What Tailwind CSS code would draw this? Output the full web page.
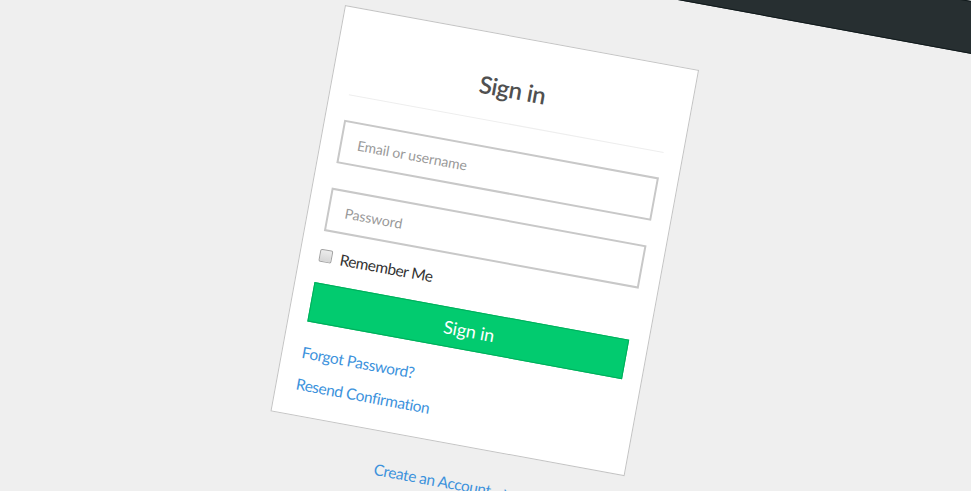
<!DOCTYPE html>
<html lang="en">
<head>
<meta charset="utf-8">
<title>Sign in</title>
<script src="https://cdn.jsdelivr.net/npm/@tailwindcss/browser@4"></script>
</head>
<body class="h-screen overflow-hidden bg-[#efefef] font-['Lato',sans-serif]">
<!-- The origin of the tilted page is the top left corner of the card -->
<div class="absolute left-[345px] top-[5px] w-[360px] origin-top-left rotate-[10.4deg] text-[#333]">
  <header class="absolute -left-[700px] -top-[117px] h-[52px] w-[1760px] border-y border-[#10191b] bg-[#272f31]"></header>
  <main class="h-[412.5px] w-[360px] border border-[#c4c4c4] bg-white px-[19px]">
    <h1 class="h-[87px] border-b border-[#eee] pt-[37px] text-center text-[24px] leading-[30px] font-semibold tracking-[-0.5px] text-[#505050]">Sign in</h1>
    <form class="pt-[25px]">
      <input type="text" placeholder="Email or username" class="block h-[43.5px] w-[320px] border-2 border-[#c8c8c8] px-[15.5px] pt-[1px] text-[14px] tracking-[-0.1px] placeholder:text-[#999]">
      <input type="password" placeholder="Password" class="mt-[25.5px] block h-[43.5px] w-[320px] border-2 border-[#c8c8c8] px-[15.5px] pt-[1px] text-[14px] tracking-[-0.05px] placeholder:text-[#999]">
      <label class="mt-[15px] flex h-5 items-center gap-[8px] text-[15.5px] leading-5 tracking-[-0.5px]"><span class="h-[13px] w-[13px] rounded-[2px] border border-[#a2a2a2] bg-linear-to-b from-[#ececec] to-[#d6d6d6]"></span>Remember Me</label>
      <button type="button" class="mt-[17px] block h-[40.5px] w-[320px] border border-[#00ae5b] bg-[#02cb6f] pt-[1px] pl-[1.5px] text-[18px] tracking-[-0.15px] text-white">Sign in</button>
    </form>
    <nav class="flex flex-col gap-3 pt-[21px] pl-[0.5px] text-[15.5px] leading-5 tracking-[-0.4px] text-[#3c92dc] [font-variant-ligatures:none]"><a>Forgot Password?</a><a>Resend Confirmation</a></nav>
  </main>
  <p class="pt-[28.5px] pl-[2px] text-center text-[15.5px] leading-5 tracking-[-0.39px] text-[#3c92dc]">Create an Account <span class="relative -top-[0.5px]">→</span></p>
</div>
</body>
</html>
